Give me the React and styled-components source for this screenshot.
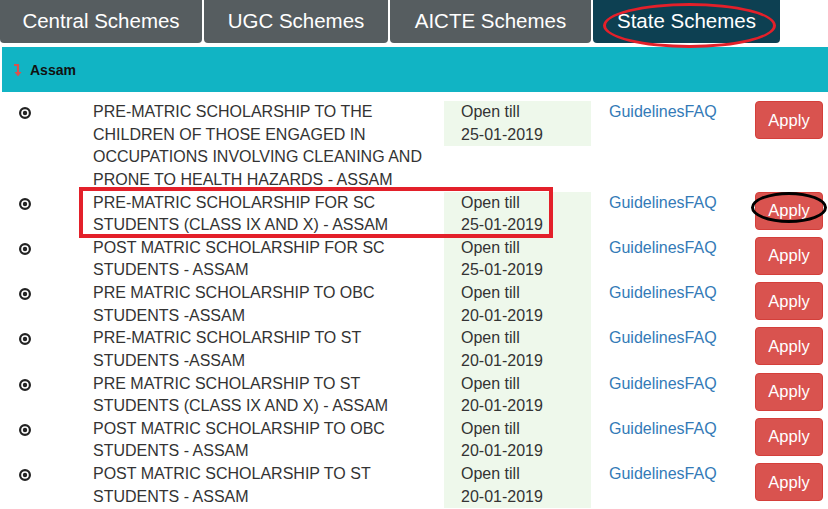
import React from "react";
import styled, { createGlobalStyle } from "styled-components";

const GlobalStyle = createGlobalStyle`
  html, body { margin: 0; padding: 0; background: #fff; }
  body { font-family: "Liberation Sans", Arial, sans-serif; color: #333; }
`;

const Page = styled.div`
  position: relative;
  width: 828px;
  height: 509px;
  overflow: hidden;
`;

const TabBar = styled.nav`
  display: flex;
  gap: 2px;
  height: 43px;
`;

const Tab = styled.div`
  display: flex;
  align-items: center;
  justify-content: center;
  width: ${(p) => p.$width}px;
  padding-bottom: 1px;
  box-sizing: border-box;
  background: ${(p) => (p.$active ? "#0d4052" : "#565d60")};
  color: #fff;
  font-size: 20.5px;
  border-radius: 0 0 4px 4px;
`;

const Heading = styled.div`
  display: flex;
  align-items: center;
  gap: 8px;
  height: 45px;
  margin: 4px 0 9px 2px;
  padding-left: 11px;
  background: #11b4c4;
  font-size: 14px;
  font-weight: bold;
  color: #111;
`;

const Rows = styled.div`
  display: flex;
  flex-direction: column;
`;

const Row = styled.div`
  display: grid;
  grid-template-columns: 78px 366px 147px 164px 68px;
  align-items: start;
  font-size: 16px;
  line-height: 22.62px;
`;

const RadioCell = styled.div`
  padding: 6px 0 0 19px;
  display: flex;
`;

const NameCell = styled.div`
  padding: 0 8px 0 15px;
  color: #333;
`;

const DateCell = styled.div`
  padding-left: 17px;
  background: #eef8eb;
  color: #333;
`;

const LinkCell = styled.div`
  padding-left: 18px;
`;

const Link = styled.a`
  color: #337ab7;
  text-decoration: none;
`;

const ApplyButton = styled.button`
  width: 68px;
  height: 38px;
  padding: 0;
  border: 1px solid #d43f3a;
  border-radius: 4px;
  background: #d9534f;
  color: #fff;
  font-family: "Liberation Sans", Arial, sans-serif;
  font-size: 16.5px;
`;

const Ellipse = styled.div`
  position: absolute;
  box-sizing: border-box;
  border: 3px solid ${(p) => p.$color};
  border-radius: 50%;
  pointer-events: none;
`;

const Frame = styled.div`
  position: absolute;
  box-sizing: border-box;
  border: 4px solid #e3202a;
  pointer-events: none;
`;

const RadioIcon = () => (
  <svg width="12" height="12" viewBox="0 0 12 12">
    <circle cx="6" cy="6" r="4.9" fill="none" stroke="#222" strokeWidth="2.2" />
    <circle cx="6" cy="6" r="2.2" fill="#222" />
  </svg>
);

const LevelDown = () => (
  <svg width="9" height="14" viewBox="0 0 9 14">
    <path d="M1 2 H5 V10" fill="none" stroke="#d9534f" strokeWidth="2.2" />
    <path d="M1.5 9 L5 13.5 L8.5 9 Z" fill="#d9534f" />
  </svg>
);

const schemes = [
  ["PRE-MATRIC SCHOLARSHIP TO THE CHILDREN OF THOSE ENGAGED IN OCCUPATIONS INVOLVING CLEANING AND PRONE TO HEALTH HAZARDS - ASSAM", "25-01-2019"],
  ["PRE-MATRIC SCHOLARSHIP FOR SC STUDENTS (CLASS IX AND X) - ASSAM", "25-01-2019"],
  ["POST MATRIC SCHOLARSHIP FOR SC STUDENTS - ASSAM", "25-01-2019"],
  ["PRE MATRIC SCHOLARSHIP TO OBC STUDENTS -ASSAM", "20-01-2019"],
  ["PRE-MATRIC SCHOLARSHIP TO ST STUDENTS -ASSAM", "20-01-2019"],
  ["PRE MATRIC SCHOLARSHIP TO ST STUDENTS (CLASS IX AND X) - ASSAM", "20-01-2019"],
  ["POST MATRIC SCHOLARSHIP TO OBC STUDENTS - ASSAM", "20-01-2019"],
  ["POST MATRIC SCHOLARSHIP TO ST STUDENTS - ASSAM", "20-01-2019"],
];

const tabs = [
  ["Central Schemes", 202],
  ["UGC Schemes", 184],
  ["AICTE Schemes", 201],
  ["State Schemes", 187],
];

export default function App() {
  return (
    <Page>
      <GlobalStyle />
      <TabBar>
        {tabs.map(([t, w]) => (
          <Tab key={t} $width={w} $active={t === "State Schemes"}>
            {t}
          </Tab>
        ))}
      </TabBar>
      <Heading>
        <LevelDown />
        Assam
      </Heading>
      <Rows>
        {schemes.map(([name, date]) => (
          <Row key={name}>
            <RadioCell>
              <RadioIcon />
            </RadioCell>
            <NameCell>{name}</NameCell>
            <DateCell>
              Open till
              <br />
              {date}
            </DateCell>
            <LinkCell>
              <Link href="#">Guidelines</Link>
              <Link href="#">FAQ</Link>
            </LinkCell>
            <ApplyButton>Apply</ApplyButton>
          </Row>
        ))}
      </Rows>
      <Ellipse $color="#e3202a" style={{ left: 603, top: 3, width: 173, height: 45 }} />
      <Frame style={{ left: 79, top: 187, width: 474, height: 51 }} />
      <Ellipse $color="#000" style={{ left: 751, top: 192, width: 76, height: 31 }} />
    </Page>
  );
}
